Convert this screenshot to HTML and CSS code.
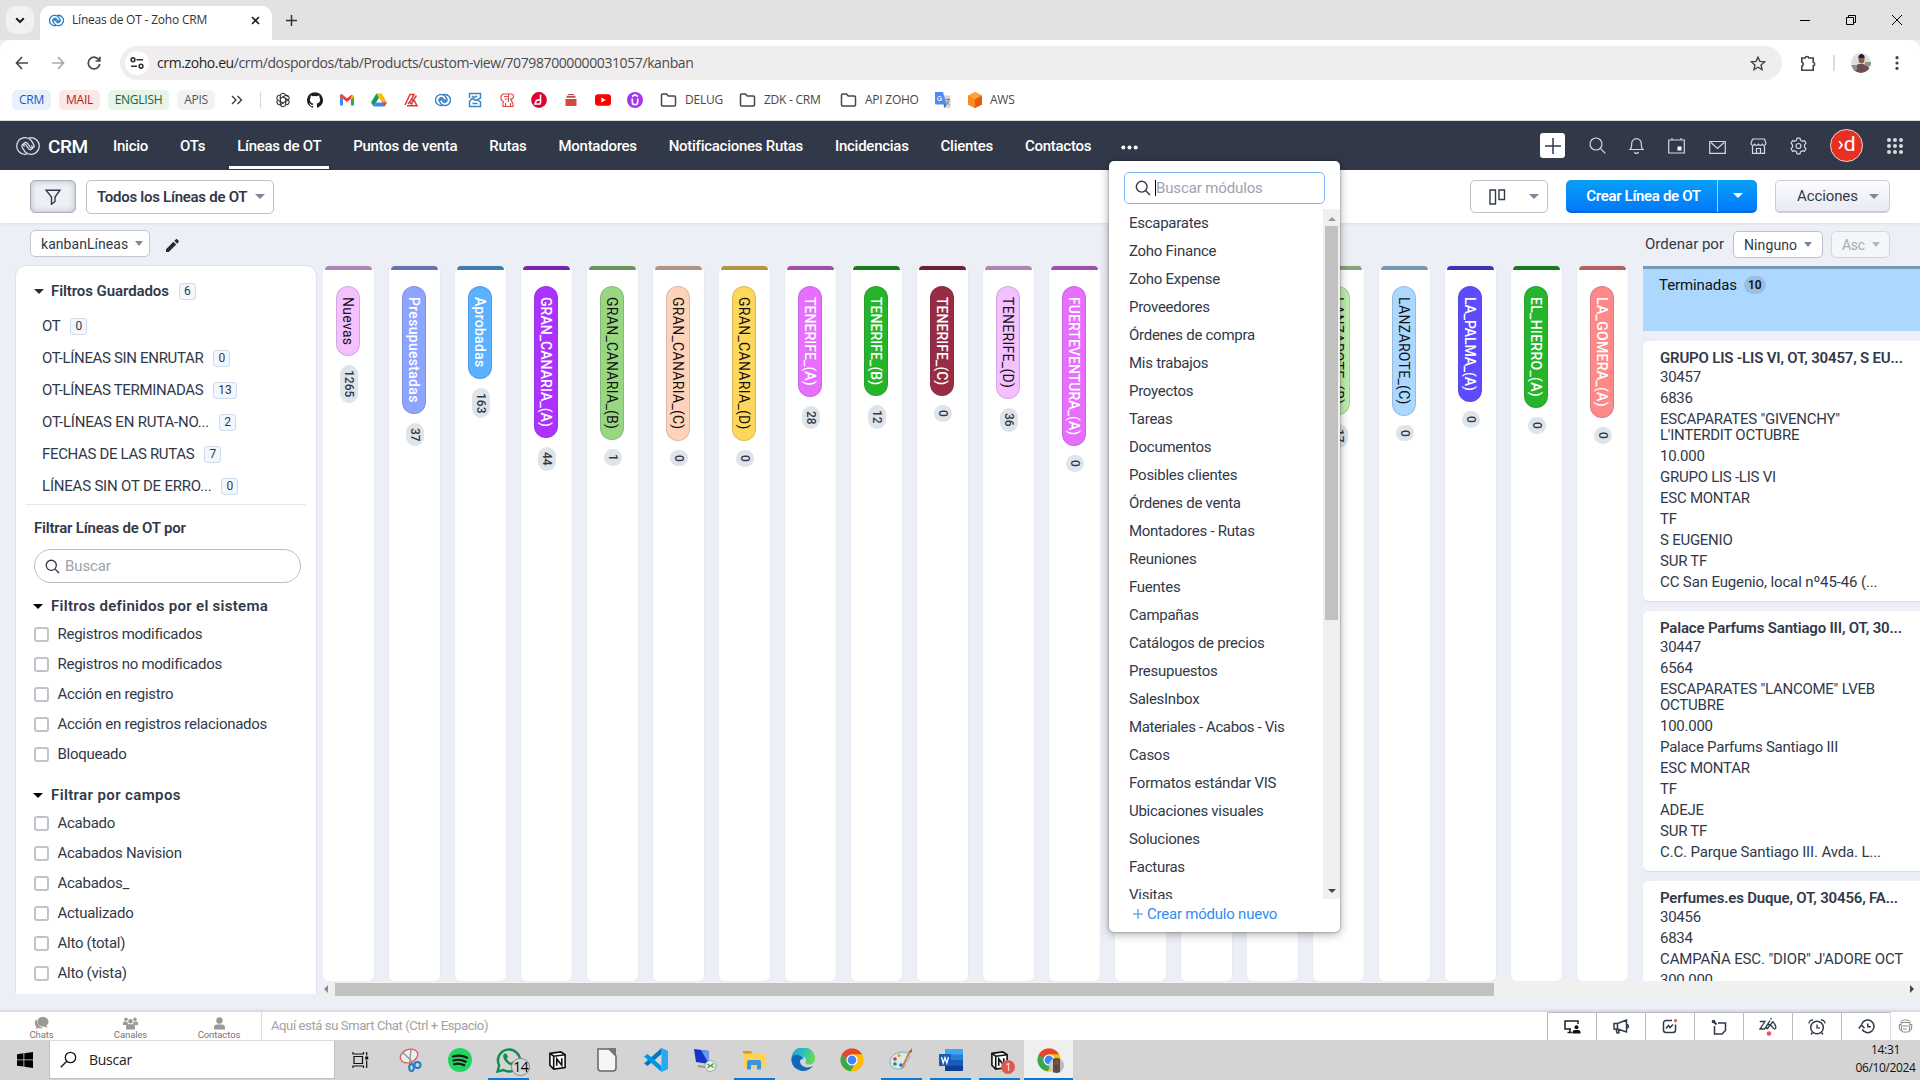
FILE: index.html
```
<!DOCTYPE html>
<html lang="es">
<head>
<meta charset="utf-8">
<title>Líneas de OT - Zoho CRM</title>
<link rel="stylesheet" href="styles.css">
</head>
<body>
<svg class="sprite" aria-hidden="true">
  <symbol id="i-search" viewBox="0 0 16 16"><circle cx="6.7" cy="6.7" r="5.4" fill="none" stroke="currentColor" stroke-width="1.4"/><path d="M10.8 10.8L15 15" stroke="currentColor" stroke-width="1.5"/></symbol>
  <symbol id="i-zoho" viewBox="0 0 24 20"><g fill="none" stroke="currentColor" stroke-linecap="round"><path d="M10.5 18.2A8.3 8.3 0 1 1 15 4.2l2.6 4.2c1.8 3-1.8 5.3-3.6 2.6l-2.5-3.6C9.8 5 6.3 7.3 8.2 10.2"/><path d="M13.5 1.8A8.3 8.3 0 1 1 9 15.800L6.400 11.600c-1.800-3 1.800-5.300 3.600-2.600l2.500 3.600c1.700 2.400 5.200.1 3.300-2.800"/></g></symbol>
  <symbol id="i-folder" viewBox="0 0 16 14"><path d="M1 2.200C1 1.500 1.500 1 2.200 1H6l1.700 2h6.100c.7 0 1.200.5 1.200 1.200v7.600c0 .7-.5 1.200-1.200 1.200H2.200C1.500 13 1 12.500 1 11.800z" fill="none" stroke="currentColor" stroke-width="1.5"/></symbol>
  <symbol id="i-notion" viewBox="0 0 20 22"><path d="M2 3.500L13.500 2 18 5v13.500L6 20l-4-4z" fill="#fff" stroke="#111" stroke-width="1.7"/><path d="M2 3.500L6 6.500 18 5M6 6.500V20" fill="none" stroke="#111" stroke-width="1.7"/><path d="M9.200 16.500V9.300l5.300 6.700V8.500" fill="none" stroke="#111" stroke-width="1.7"/></symbol>
  <symbol id="i-chrome" viewBox="0 0 24 24"><circle cx="12" cy="12" r="11.500" fill="#fbbc05"/><path d="M2 6.300a11.500 11.500 0 0 0 8.500 17L15.500 15 12 12 7 14.500z" fill="#34a853"/><path d="M2 6.300L7.200 15 12 12V6.300z" fill="#34a853"/><path d="M2 6.300A11.500 11.500 0 0 1 22 6.300H12a6 6 0 0 0-5.600 4.200z" fill="#ea4335"/><circle cx="12" cy="12" r="5.600" fill="#fff"/><circle cx="12" cy="12" r="4.400" fill="#4285f4"/></symbol>
</svg>

<header class="tabstrip">
  <div class="tab-search"><svg width="10" height="7" viewBox="0 0 10 7"><path d="M1.200 1.200L5 5l3.800-3.800" fill="none" stroke="#1f1f1f" stroke-width="2"/></svg></div>
  <div class="tab">
    <svg class="blue" width="15" height="13"><use href="#i-zoho"/></svg>
    <span class="tab-title">Líneas de OT - Zoho CRM</span>
    <svg width="9" height="9" viewBox="0 0 9 9"><path d="M1 1l7 7M8 1L1 8" stroke="#1f1f1f" stroke-width="1.600"/></svg>
  </div>
  <svg class="newtab" width="11" height="11" viewBox="0 0 11 11"><path d="M5.500 0v11M0 5.500h11" stroke="#333" stroke-width="1.500"/></svg>
  <div class="winbtns">
    <svg width="10" height="10" viewBox="0 0 10 10"><path d="M0 5.500h10" stroke="#000"/></svg>
    <svg width="10" height="10" viewBox="0 0 10 10"><path d="M.5 2.500h7v7h-7zM2.500 2V.5h7v7H8" fill="none" stroke="#000"/></svg>
    <svg width="10" height="10" viewBox="0 0 10 10"><path d="M0 0l10 10M10 0L0 10" stroke="#000"/></svg>
  </div>
</header>

<div class="addressbar">
  <svg class="nav-ico" width="14" height="14" viewBox="0 0 14 14"><path d="M7 1L1.500 7 7 13M1.500 7H13" fill="none" stroke="#474747" stroke-width="1.700"/></svg>
  <svg class="nav-ico" width="14" height="14" viewBox="0 0 14 14"><path d="M7 1l5.500 6L7 13M12.500 7H1" fill="none" stroke="#aaa" stroke-width="1.700"/></svg>
  <svg class="nav-ico" width="14" height="14" viewBox="0 0 14 14"><path d="M12.300 4.500A5.800 5.800 0 1 0 12.800 8M12.800 0.800v4.200H8.600" fill="none" stroke="#474747" stroke-width="1.700"/></svg>
  <div class="omnibox">
    <span class="site-info"><svg width="14" height="12" viewBox="0 0 14 12"><g fill="none" stroke="#333" stroke-width="1.600"><circle cx="3" cy="2.800" r="1.900"/><path d="M6.500 2.800H13M1 9.200h6"/><circle cx="11" cy="9.200" r="1.900"/></g></svg></span>
    <span class="url"><b>crm.zoho.eu</b>/crm/dospordos/tab/Products/custom-view/707987000000031057/kanban</span>
    <svg width="16" height="15" viewBox="0 0 16 15"><path d="M8 1.200l1.900 4.200 4.600.5-3.400 3.100.9 4.500L8 11.200l-4 2.300.9-4.500L1.500 5.900l4.600-.5z" fill="none" stroke="#444" stroke-width="1.400"/></svg>
  </div>
  <svg width="17" height="17" viewBox="0 0 17 17"><path d="M1.800 3h3.400a1.900 1.900 0 0 1 3.700 0h4.300v4.200a1.900 1.900 0 0 1 0 3.700v4.300H1.800v-4a2.200 2.200 0 0 0 0-4.100z" fill="none" stroke="#444" stroke-width="1.600"/></svg>
  <i class="bar-sep"></i>
  <svg width="20" height="20" viewBox="0 0 20 20"><clipPath id="pc"><circle cx="10" cy="10" r="10"/></clipPath><g clip-path="url(#pc)"><path d="M0 0h20v20H0z" fill="#dfe0dc"/><path d="M2 20c0-7 3-9 8-9s9 2 9 9z" fill="#6d4e52"/><path d="M0 12h6v5H0zM14 9h6v4h-6z" fill="#8d9190"/><ellipse cx="10.500" cy="6.500" rx="3" ry="4" fill="#8a5a45"/><path d="M7.300 5C7-.5 14-.5 13.700 5z" fill="#1b2337"/></g></svg>
  <svg width="4" height="14" viewBox="0 0 4 14"><g fill="#444"><circle cx="2" cy="1.700" r="1.600"/><circle cx="2" cy="7" r="1.600"/><circle cx="2" cy="12.300" r="1.600"/></g></svg>
</div>

<nav class="bookmarks">
  <span class="chip c-blue">CRM</span><span class="chip c-red">MAIL</span><span class="chip c-green">ENGLISH</span><span class="chip c-gray">APIS</span>
  <svg class="more" width="12" height="10" viewBox="0 0 12 10"><path d="M1 1l4 4-4 4M6.500 1l4 4-4 4" fill="none" stroke="#333" stroke-width="1.300"/></svg>
  <i class="bm-sep"></i>
  <div class="bm-icons">
    <svg viewBox="0 0 16 16"><g fill="none" stroke="#333" stroke-width="1.100"><path id="oa" d="M8 5L5.300 6.600V3.800A2.700 2.700 0 0 1 10.500 3L13.200 4.600"/><path d="M8 5L5.300 6.600V3.800A2.700 2.700 0 0 1 10.500 3L10.700 6.500" transform="rotate(60 8 8)"/><path d="M8 5L5.300 6.600V3.800A2.700 2.700 0 0 1 10.500 3" transform="rotate(120 8 8)"/><path d="M8 5L5.300 6.600V3.800A2.700 2.700 0 0 1 10.500 3L10.700 6.500" transform="rotate(180 8 8)"/><path d="M8 5L5.300 6.600V3.800A2.700 2.700 0 0 1 10.500 3" transform="rotate(240 8 8)"/><path d="M8 5L5.300 6.600V3.800A2.700 2.700 0 0 1 10.500 3" transform="rotate(300 8 8)"/></g></svg>
    <svg viewBox="0 0 16 16"><path d="M8 .2a8 8 0 0 0-2.500 15.600c.4.100.5-.2.500-.4v-1.500c-2.200.5-2.700-1-2.700-1-.4-.9-.9-1.200-.9-1.200-.7-.5.100-.5.100-.5.800.1 1.200.8 1.200.8.700 1.200 1.900.9 2.300.7.100-.5.300-.9.500-1.100-1.800-.2-3.600-.9-3.600-4 0-.9.300-1.600.8-2.100-.1-.2-.4-1 .1-2.100 0 0 .7-.2 2.200.8a7.700 7.700 0 0 1 4 0c1.500-1 2.200-.8 2.200-.8.400 1.100.2 1.900.1 2.100.5.600.8 1.300.8 2.100 0 3.100-1.900 3.800-3.700 4 .3.300.6.800.6 1.500v2.300c0 .2.100.5.500.4A8 8 0 0 0 8 .2z" fill="#1b1f24"/></svg>
    <svg viewBox="0 0 16 16"><path d="M1 3.500V13.500h3V7z" fill="#4285f4"/><path d="M15 3.500v10h-3V7z" fill="#34a853"/><path d="M1 4.500V3.500c0-1 1.500-1.500 2.500-.8L8 6.200l4.500-3.500 2.500 1.800L8 10z" fill="#ea4335"/><path d="M12 4.900l.8-.9c1-.8 2.200-.2 2.200.8v.8L12 7.500z" fill="#fbbc04"/></svg>
    <svg viewBox="0 0 16 16"><path d="M5.400 1.500h5.200L16 10.500h-5.200z" fill="#fbbc04"/><path d="M5.400 1.500L0 10.500l2.600 4L8 5.700z" fill="#0f9d58"/><path d="M2.600 14.500h10.800l2.600-4H5z" fill="#4285f4"/><path d="M10.800 10.500H16l-2.600 4z" fill="#ea4335"/></svg>
    <svg viewBox="0 0 16 16"><path d="M2 13L7 2.500h4L7.500 9 5 12M4 13.800h10L11 8 8.500 12 6 9.500M8 6.500l2 2L13.500 3.500" fill="none" stroke="#dc3a3a" stroke-width="1.500"/></svg>
    <svg class="blue" viewBox="0 0 24 20"><use href="#i-zoho"/></svg>
    <svg viewBox="0 0 16 16"><path d="M2.500 6V1.500H13.500V6L9 8.500 5 6.500 2.500 9.500V14.500H13.500V10L10.500 8M5 4l2 1.500L10 4M5.500 11.500h5" fill="none" stroke="#3d87c4" stroke-width="1.500"/></svg>
    <svg viewBox="0 0 16 16"><path d="M5 9.500C1 9.500.800 2 5 2h7c3.500 0 3.500 5-.3 5.200L14 12v2.500H4V10M5 4.500h4M5.500 7h3M9.500 2v8M6.500 14v-3M11.500 14v-3" fill="none" stroke="#dc4a4a" stroke-width="1.200"/></svg>
    <svg viewBox="0 0 16 16"><circle cx="8" cy="8" r="7.900" fill="#dd0031"/><path d="M9.500 2.500v7.800M9.500 7.500L5.500 8.500 4 12h5l.8-2.500" fill="none" stroke="#fff" stroke-width="1.600"/></svg>
    <svg viewBox="0 0 16 16"><path d="M2.500 7h11v7h-11z" fill="#d04a44"/><path d="M3.500 3.700h9v2h-9zM5 2h6v1H5z" fill="#b9504c"/></svg>
    <svg viewBox="0 0 16 16"><rect y="2.200" width="16" height="11.600" rx="3" fill="#f00"/><path d="M6.300 5.500v5l4.500-2.500z" fill="#fff"/></svg>
    <svg viewBox="0 0 16 16"><circle cx="8" cy="8" r="8" fill="#a435f0"/><path d="M5.300 6.500v3.500a2.700 2.700 0 0 0 5.400 0V6.500M5 4.500L8 2.700l3 1.800" fill="none" stroke="#fff" stroke-width="1.600"/></svg>
  </div>
  <span class="bm f1"><svg width="17" height="14"><use href="#i-folder"/></svg>DELUG</span>
  <span class="bm f2"><svg width="17" height="14"><use href="#i-folder"/></svg>ZDK - CRM</span>
  <span class="bm f3"><svg width="17" height="14"><use href="#i-folder"/></svg>API ZOHO</span>
  <span class="bm f4"><svg width="16" height="16" viewBox="0 0 16 16"><path d="M6 3.500h9.500V16H9z" fill="#d6d6d6"/><path d="M0 0h8l3.500 12.500H1A1 1 0 0 1 0 11.500z" fill="#4c8bf5"/><path d="M9 12.500h2.500L9.500 16z" fill="#2355b5"/><path d="M6.500 5.200A2.200 2.200 0 1 0 7 6.800H4.900" fill="none" stroke="#fff" stroke-width="1"/><path d="M10.500 7.500H15M12.700 6.500v1M11 12.500c1.500-1 2.500-2.500 3-5M11.500 9c.5 1.500 1.800 2.800 3 3.500" fill="none" stroke="#777" stroke-width=".9"/></svg></span>
  <span class="bm"><svg width="14" height="16" viewBox="0 0 14 16"><path d="M7 0l7 3.500v9L7 16l-7-3.500v-9z" fill="#f58536"/><path d="M0 3.500L7 7v9l-7-3.500z" fill="#f68b1f"/><path d="M14 3.500L7 7v9l7-3.500z" fill="#e8590c"/><path d="M7 0l7 3.500L7 7 0 3.500z" fill="#fda33b"/></svg>AWS</span>
</nav>

<div class="crm">
<nav class="crmnav">
  <svg class="logo" width="24" height="20"><use href="#i-zoho"/></svg>
  <span class="brand">CRM</span>
  <div class="mods">
    <a>Inicio</a><a>OTs</a><a class="on">Líneas de OT</a><a>Puntos de venta</a><a>Rutas</a><a>Montadores</a><a>Notificaciones Rutas</a><a>Incidencias</a><a>Clientes</a><a>Contactos</a>
  </div>
  <svg class="dots" width="17" height="5" viewBox="0 0 17 5"><g fill="#fff"><circle cx="2.300" cy="2.500" r="2"/><circle cx="8.500" cy="2.500" r="2"/><circle cx="14.700" cy="2.500" r="2"/></g></svg>
  <div class="tools">
    <span class="plus"><svg width="16" height="16" viewBox="0 0 16 16"><path d="M8 0v16M0 8h16" stroke="#313949" stroke-width="1.500"/></svg></span>
    <svg class="t1" width="17" height="17" viewBox="0 0 17 17"><circle cx="7" cy="7" r="6" fill="none" stroke="currentColor" stroke-width="1.200"/><path d="M11.300 11.300l5 5" stroke="currentColor" stroke-width="1.200"/></svg>
    <svg class="t2" width="15" height="18" viewBox="0 0 15 18"><path d="M1 12.500c1.700-1.200 1.700-3 1.700-6a4.800 4.800 0 0 1 9.600 0c0 3 0 4.800 1.700 6zM5.500 15a2.100 2.100 0 0 0 4 0" fill="none" stroke="currentColor" stroke-width="1.200"/></svg>
    <svg class="t3" width="17" height="17" viewBox="0 0 17 17"><path d="M.7 3h15.600v13H.7zM4 1v2M13 1v2" fill="none" stroke="currentColor" stroke-width="1.200"/><path d="M9.500 9.500h4v4h-4z" fill="#fff"/></svg>
    <svg class="t4" width="17" height="14" viewBox="0 0 17 14"><path d="M.7 1.500h15.600v11.800H.7zM2 2.500l6.500 6 6.500-6" fill="none" stroke="currentColor" stroke-width="1.200"/></svg>
    <svg class="t5" width="17" height="16" viewBox="0 0 17 16"><path d="M2.500 1h12L16 5.500a2 2 0 0 1-3.700.8 2.200 2.200 0 0 1-3.800 0 2.200 2.200 0 0 1-3.800 0A2 2 0 0 1 1 5.500zM2.500 8v7.300h12V8M6.500 15v-4.500h4V15" fill="none" stroke="currentColor" stroke-width="1.200"/></svg>
    <svg class="t6" width="17" height="18" viewBox="0 0 17 18"><path d="M7 1.200h3l.6 2.100 1.700 1 2.200-.6L16 6.200l-1.500 1.700v2.200l1.500 1.700-1.500 2.500-2.200-.6-1.700 1-.6 2.100H7l-.6-2.100-1.700-1-2.200.6L1 11.800l1.500-1.700V7.900L1 6.200l1.500-2.500 2.200.6 1.700-1z" fill="none" stroke="currentColor" stroke-width="1.200" stroke-linejoin="round"/><circle cx="8.500" cy="9" r="2.500" fill="none" stroke="currentColor" stroke-width="1.200"/></svg>
    <span class="me">›d</span>
    <svg class="grid9" width="16" height="16" viewBox="0 0 16 16"><g fill="#d8dae0"><circle cx="2" cy="2" r="2"/><circle cx="8" cy="2" r="2"/><circle cx="14" cy="2" r="2"/><circle cx="2" cy="8" r="2"/><circle cx="8" cy="8" r="2"/><circle cx="14" cy="8" r="2"/><circle cx="2" cy="14" r="2"/><circle cx="8" cy="14" r="2"/><circle cx="14" cy="14" r="2"/></g></svg>
  </div>
</nav>

<div class="viewbar">
  <button class="fbtn"><svg width="16" height="16" viewBox="0 0 16 16"><path d="M1 1.200h14L10 8v4.500l-3.500 2.700V8z" fill="none" stroke="#313949" stroke-width="1.400"/></svg></button>
  <button class="sel view">Todos los Líneas de OT<i class="car"></i></button>
  <div class="right">
    <button class="sel kb"><svg width="17" height="16" viewBox="0 0 17 16"><path d="M1 1h5.500v14H1zM10 1h5.500v9.500H10z" fill="none" stroke="#313949" stroke-width="1.400"/></svg><i class="car"></i></button>
    <button class="create"><span>Crear Línea de OT</span><em><i class="car w"></i></em></button>
    <button class="act">Acciones<i class="car"></i></button>
  </div>
</div>

<main class="work">
  <div class="subbar">
    <button class="sel kl">kanbanLíneas<i class="car"></i></button>
    <svg class="pencil" width="13" height="13" viewBox="0 0 14 14"><path d="M0 14v-3L8 3l3 3-8 8zM9 2l1.500-1.500c.5-.5 1.200-.5 1.700 0l1.200 1.200c.5.500.5 1.200 0 1.700L12 5z" fill="#262b3a"/></svg>
    <span class="ord">Ordenar por</span>
    <button class="sel nin">Ninguno<i class="car"></i></button>
    <button class="sel asc">Asc<i class="car"></i></button>
  </div>
  <div class="body">
    <aside class="side">
      <h3 class="h-saved"><i class="car d"></i>Filtros Guardados<b class="n">6</b></h3>
      <ul class="saved">
        <li>OT<b class="n">0</b></li>
        <li>OT-LÍNEAS SIN ENRUTAR<b class="n">0</b></li>
        <li>OT-LÍNEAS TERMINADAS<b class="n">13</b></li>
        <li class="loose">OT-LÍNEAS EN RUTA-NO...<b class="n">2</b></li>
        <li>FECHAS DE LAS RUTAS<b class="n">7</b></li>
        <li class="loose">LÍNEAS SIN OT DE ERRO...<b class="n">0</b></li>
      </ul>
      <h3 class="h-by">Filtrar Líneas de OT por</h3>
      <div class="find"><svg width="15" height="15"><use href="#i-search"/></svg>Buscar</div>
      <h3 class="h-sec wide"><i class="car k"></i>Filtros definidos por el sistema</h3>
      <ul class="checks">
        <li>Registros modificados</li><li>Registros no modificados</li><li>Acción en registro</li><li>Acción en registros relacionados</li><li>Bloqueado</li>
      </ul>
      <h3 class="h-sec wide second"><i class="car k"></i>Filtrar por campos</h3>
      <ul class="checks">
        <li>Acabado</li><li>Acabados Navision</li><li>Acabados_</li><li>Actualizado</li><li>Alto (total)</li><li>Alto (vista)</li>
      </ul>
    </aside>
    <section class="board">
      <div class="cols">
        <div class="col pinkl"><span class="pill">Nuevas</span><span class="ct">1265</span></div>
        <div class="col peri"><span class="pill">Presupuestadas</span><span class="ct">37</span></div>
        <div class="col sky"><span class="pill">Aprobadas</span><span class="ct">163</span></div>
        <div class="col violet"><span class="pill caps">GRAN_CANARIA_(A)</span><span class="ct">44</span></div>
        <div class="col leaf"><span class="pill">GRAN_CANARIA_(B)</span><span class="ct">1</span></div>
        <div class="col peach"><span class="pill">GRAN_CANARIA_(C)</span><span class="ct">0</span></div>
        <div class="col gold"><span class="pill">GRAN_CANARIA_(D)</span><span class="ct">0</span></div>
        <div class="col fuch"><span class="pill caps">TENERIFE_(A)</span><span class="ct">28</span></div>
        <div class="col green"><span class="pill caps">TENERIFE_(B)</span><span class="ct">12</span></div>
        <div class="col wine"><span class="pill caps">TENERIFE_(C)</span><span class="ct">0</span></div>
        <div class="col pinkl"><span class="pill">TENERIFE_(D)</span><span class="ct">36</span></div>
        <div class="col fuch"><span class="pill caps">FUERTEVENTURA_(A)</span><span class="ct">0</span></div>
        <div class="col"></div><div class="col"></div><div class="col"></div>
        <div class="col mint"><span class="pill">LANZAROTE_(B)</span><span class="ct">17</span></div>
        <div class="col ice"><span class="pill">LANZAROTE_(C)</span><span class="ct">0</span></div>
        <div class="col indigo"><span class="pill tight">LA_PALMA_(A)</span><span class="ct">0</span></div>
        <div class="col green"><span class="pill">EL_HIERRO_(A)</span><span class="ct">0</span></div>
        <div class="col coral"><span class="pill">LA_GOMERA_(A)</span><span class="ct">0</span></div>
        <div class="done">
          <div class="done-h">Terminadas<b>10</b></div>
          <article><h4>GRUPO LIS -LIS VI, OT, 30457, S EU...</h4><p>30457</p><p>6836</p><p>ESCAPARATES "GIVENCHY"<br>L'INTERDIT OCTUBRE</p><p>10.000</p><p>GRUPO LIS -LIS VI</p><p>ESC MONTAR</p><p>TF</p><p>S EUGENIO</p><p>SUR TF</p><p class="addr">CC San Eugenio, local nº45-46 (...</p></article>
          <article><h4>Palace Parfums Santiago III, OT, 30...</h4><p>30447</p><p>6564</p><p>ESCAPARATES "LANCOME" LVEB<br>OCTUBRE</p><p>100.000</p><p>Palace Parfums Santiago III</p><p>ESC MONTAR</p><p>TF</p><p>ADEJE</p><p>SUR TF</p><p class="addr">C.C. Parque Santiago III. Avda. L...</p></article>
          <article><h4>Perfumes.es Duque, OT, 30456, FA...</h4><p>30456</p><p>6834</p><p class="addr">CAMPAÑA ESC. "DIOR" J'ADORE OCT</p><p>300.000</p></article>
        </div>
      </div>
      <div class="hscroll"><i class="la"></i><i class="thumb"></i><i class="ra"></i></div>
    </section>
  </div>
</main>

<footer class="chatbar">
  <div class="chats">
    <span><svg width="15" height="13" viewBox="0 0 15 13"><path d="M1.500 12c1-.5 1-1.500.8-2C-.5 6 1 3 3 2.500 2.500 6 5 10 9 10.500c-1.500 1-3.500 1-5 .5-.8.700-1.700 1-2.500 1zM8.500 0C12 0 14.500 2 14.500 4.800c0 1.700-1 3-2 3.700.1 1 .5 1.500 1.200 2-1.200.2-2.500-.3-3.200-1C6 10 3.500 7.500 3.500 4.800 3.500 2 5.500 0 8.500 0z" fill="#999"/></svg>Chats</span>
    <span><svg width="15" height="13" viewBox="0 0 15 13"><g fill="#999"><circle cx="3" cy="2.300" r="1.800"/><circle cx="12" cy="2.300" r="1.800"/><circle cx="7.500" cy="4.300" r="2.300"/><path d="M0 8V6c0-1 .7-1.500 1.700-1.500h2.500C4.500 6 5 7 5.500 7.500L3.500 8zM15 8V6c0-1-.7-1.500-1.700-1.500h-2.500C10.500 6 10 7 9.500 7.500l2 .5zM3 12.500V9.500c0-1.500 1-2.200 2.500-2.200h4c1.500 0 2.500.7 2.500 2.200v3z"/></g></svg>Canales</span>
    <span><svg width="13" height="13" viewBox="0 0 13 13"><g fill="#999"><circle cx="6.500" cy="3.500" r="3.200"/><path d="M1 12.500v-2C1 8.500 2.300 7.500 4 7.500h5c1.700 0 3 1 3 3v2z"/></g></svg>Contactos</span>
  </div>
  <div class="smart">Aquí está su Smart Chat (Ctrl + Espacio)</div>
  <div class="cbtns">
    <span><svg width="17" height="14" viewBox="0 0 17 14"><path d="M7 9H1V1h13v3M6 9v3.500M3.500 12.500H8" fill="none" stroke="#222" stroke-width="1.500"/><circle cx="12.500" cy="7.300" r="2" fill="#111"/><path d="M8.500 13.500v-1c0-1.700 1-2.500 2.500-2.500h3c1.500 0 2.500.8 2.500 2.500v1z" fill="#111"/></svg></span>
    <span><svg width="17" height="15" viewBox="0 0 17 15"><path d="M1 4.500h3.500L13.500 1v12L4.500 10H1zM4.500 4.500V10M13.500 5.500c2.500 0 2.500 3.500 0 3.500M3 10l1 4 2-.2-.7-3.600" fill="none" stroke="#313949" stroke-width="1.500"/></svg></span>
    <span><svg width="16" height="15" viewBox="0 0 16 15"><path d="M10 1.500H4A2.500 2.500 0 0 0 1.500 4v7A2.500 2.500 0 0 0 4 13.500h7a2.500 2.500 0 0 0 2.500-2.500V5.500M4 9.500l2.500-3 1.500 2 3-3" fill="none" stroke="#313949" stroke-width="1.500"/><circle cx="13.500" cy="1.700" r="1.600" fill="#f0555b"/></svg></span>
    <span><svg width="16" height="16" viewBox="0 0 16 16"><path d="M7 4h7.500v7.500L11 15H3.500V7" fill="none" stroke="#313949" stroke-width="1.500"/><path d="M2 2l3.500 3.500" stroke="#313949" stroke-width="2"/><circle cx="2.500" cy="2.500" r="1.800" fill="#313949"/></svg></span>
    <span><svg width="18" height="19" viewBox="0 0 18 19"><path d="M.8 4.500h5.200L1 12h4.500L11 3.500M8 12L14 4.500M8 12c-2-3 1-5.500 3.500-4C13 9 14 12 15.500 12c2 0 1.500-3 0-5L14 4.500M11.500 2.500L12.500 1" fill="none" stroke="#313949" stroke-width="1.300"/><circle cx="10" cy="16.500" r="2.300" fill="#f0555b"/></svg></span>
    <span><svg width="18" height="16" viewBox="0 0 18 16"><circle cx="9" cy="8.500" r="6.300" fill="none" stroke="#313949" stroke-width="1.500"/><path d="M9 5.500v3.300h3M1 4.500C1 2 3 .8 5 1M17 4.500C17 2 15 .8 13 1M4.500 13.500L3 15.500M13.500 13.500l1.500 2" fill="none" stroke="#313949" stroke-width="1.300"/></svg></span>
    <span><svg width="17" height="15" viewBox="0 0 17 15"><path d="M4.200 10.500a6.300 6.300 0 1 0-.4-5.500M.8 9.500L3.500 6l3 3.300M9.800 4.500v3.300h3" fill="none" stroke="#313949" stroke-width="1.500"/></svg></span>
    <span class="last"><svg width="15" height="14" viewBox="0 0 15 14"><path d="M3 3.500h9l-.7 9c-1.500.8-6 .8-7.500 0zM4.500 7h6M5 10h4M3 5.500L1 5.700l.8 5 1.700.8M12 5.500l2 .2-.8 5-1.700.8M2.500 2.500c2-2 8-2 10 0" fill="none" stroke="#888" stroke-width="1"/></svg></span>
  </div>
</footer>
</div>

<div class="taskbar">
  <div class="start"><svg width="16" height="16" viewBox="0 0 16 16"><path d="M0 2.200L6.500 1.300v6.200H0zM7.300 1.200L16 0v7.500H7.300zM0 8.300h6.500v6.200L0 13.700zM7.300 8.300H16V16l-8.700-1.200z" fill="#000"/></svg></div>
  <div class="tsearch"><svg width="17" height="17" viewBox="0 0 17 17"><circle cx="10.500" cy="6.500" r="5.200" fill="none" stroke="#111" stroke-width="1.300"/><path d="M6.800 10.200L.8 16.200" stroke="#111" stroke-width="1.300"/></svg>Buscar</div>
  <div class="apps">
    <span><svg width="17" height="16" viewBox="0 0 17 16"><path d="M2 4.500h8.500v7H2zM1 0v2h10.500V0M1 16v-2h10.500V16M14.700 0v3.500M14.700 8.500V16" fill="none" stroke="#111" stroke-width="1.200"/><path d="M13.200 4.500h3v3h-3z" fill="#111"/></svg></span>
    <span><svg width="23" height="24" viewBox="0 0 23 24"><ellipse cx="10" cy="8" rx="9" ry="6.500" transform="rotate(-22 10 8)" fill="#eee" stroke="#e2575b" stroke-width="1.300"/><path d="M3 4l13 12M12 1.500l-1.500 14" stroke="#999" stroke-width="1.500"/><circle cx="18.500" cy="17" r="3" fill="none" stroke="#1f7fc9" stroke-width="2"/><ellipse cx="12.500" cy="19.500" rx="2.300" ry="3.500" fill="none" stroke="#1f7fc9" stroke-width="2"/></svg></span>
    <span><svg width="24" height="24" viewBox="0 0 24 24"><circle cx="12" cy="12" r="12" fill="#1ed760"/><path d="M5 8.500c5-1.500 10-1 14.200 1.200M5.500 12.500c4-1.200 8.500-.8 12.200 1.200M6 16.200c3.500-1 7-.6 10.200 1" fill="none" stroke="#191414" stroke-width="2.200" stroke-linecap="round"/></svg></span>
    <span class="run"><svg width="26" height="26" viewBox="0 0 26 26"><path d="M1.500 24.500l1.700-6A11 11 0 1 1 7.500 23z" fill="none" stroke="#128c4c" stroke-width="2.400"/><path d="M8.500 6.500c-2.500 2-1 6 2 9s7 4.500 9 1.500l-3-2.500-1.500 1.200c-2-.7-3.500-2.200-4.300-4.200l1.300-1.500-1.500-3.300z" fill="#128c4c"/></svg><b class="bdg gray">14</b></span>
    <span><svg width="19" height="21"><use href="#i-notion"/></svg></span>
    <span><svg width="20" height="24" viewBox="0 0 20 24"><path d="M1 1h11l7 7v12a3 3 0 0 1-3 3H4a3 3 0 0 1-3-3z" fill="#f6f6f6" stroke="#666" stroke-width="1.500"/><path d="M11 0h8v8z" fill="#777"/></svg></span>
    <span><svg width="24" height="24" viewBox="0 0 24 24"><path d="M17.500 0v24L24 21V3z" fill="#2aa8f2"/><path d="M17.500 6L3.500 18 0 15.500 17.500 0z" fill="#0078bf"/><path d="M17.500 18L3.500 6 0 8.500 17.500 24z" fill="#0098e0"/></svg></span>
    <span><svg width="24" height="24" viewBox="0 0 24 24"><path d="M1 1l15 2v13L3 14z" fill="#1633c8"/><path d="M8 2l8 1v13z" fill="#6f93f0"/><path d="M5 17l7 1v2l-7-1z" fill="#999"/><circle cx="17.500" cy="18" r="5.500" fill="#e9efe6" stroke="#9a9"/><path d="M14.500 16l2.500 2-2.500 2M20.500 15.500l-2.500 2 2.500 2" fill="none" stroke="#3ba03b" stroke-width="1.300"/></svg></span>
    <span class="run"><svg width="24" height="20" viewBox="0 0 24 20"><path d="M1 1h8l2 3H1z" fill="#dc9b09"/><path d="M1 3.500h22V18H1z" fill="#ffd257"/><path d="M5 19.500V12c0-1.500.8-2 2-2h10c1.200 0 2 .5 2 2v7.500h-4V15H9v4.500z" fill="#3a95e0"/></svg></span>
    <span><svg width="24" height="24" viewBox="0 0 24 24"><defs><linearGradient id="eg" x1="0" y1="0" x2="1" y2=".3"><stop offset="0" stop-color="#1e9bdd"/><stop offset=".6" stop-color="#35c1b8"/><stop offset="1" stop-color="#63d957"/></linearGradient></defs><path d="M.5 11A11.700 11.700 0 0 1 24 10.500c0 4-3 6-6 6-2.500 0-4-1-3.300-2.500.8-1.500.8-5-3-5C7 9 5 11 5 15z" fill="url(#eg)"/><path d="M.3 12C.8 7 5 6.500 8.500 7.500c2.500.7 4 2.500 4 4C9 9.500 8 14 10.500 17c2.500 2.800 7.500 3.500 11.500.8A12 12 0 0 1 .3 12z" fill="#1268b8"/></svg></span>
    <span><svg width="24" height="24"><use href="#i-chrome"/></svg></span>
    <span class="run"><svg width="24" height="24" viewBox="0 0 24 24"><path d="M1 14C1 7 8 4 15 4c6 1 7 6 3 9-3 2-1 4-3 6-5 4-14 2-14-5z" fill="#d9e9f3" stroke="#7fa9c4"/><circle cx="6" cy="11" r="1.800" fill="#d33"/><circle cx="10" cy="7.500" r="1.800" fill="#e8b21c"/><circle cx="6" cy="16" r="1.800" fill="#2a8f3d"/><circle cx="12" cy="17" r="1.800" fill="#2868c8"/><path d="M21 3l-8 17" stroke="#c98a45" stroke-width="2"/><path d="M22.500 0l.5 4-3 1z" fill="#8c5522"/></svg></span>
    <span class="run"><svg width="24" height="22" viewBox="0 0 24 22"><path d="M6 0h18v22H6z" fill="#2b7cd3"/><path d="M6 0h18v5.500H6z" fill="#41a5ee"/><path d="M6 11h18v5.500H6z" fill="#185abd"/><path d="M6 16.500h18V22H6z" fill="#103f91"/><path d="M0 5h12v12H0z" fill="#185abd"/><path d="M2.500 8l1.700 6L6 8.500 7.800 14 9.500 8" fill="none" stroke="#fff" stroke-width="1.300"/></svg></span>
    <span class="run"><svg width="19" height="21"><use href="#i-notion"/></svg><b class="bdg red">1</b></span>
    <span class="run active"><svg width="24" height="24"><use href="#i-chrome"/></svg><b class="bdg face"></b></span>
  </div>
  <div class="clock">14:31<br>06/10/2024</div>
</div>

<div class="menu">
  <div class="mfind"><svg width="16" height="16"><use href="#i-search"/></svg><i></i>Buscar módulos</div>
  <div class="mlist">
    <ul>
      <li>Escaparates</li><li>Zoho Finance</li><li>Zoho Expense</li><li>Proveedores</li><li>Órdenes de compra</li><li>Mis trabajos</li><li>Proyectos</li><li>Tareas</li><li>Documentos</li><li>Posibles clientes</li><li>Órdenes de venta</li><li>Montadores - Rutas</li><li>Reuniones</li><li>Fuentes</li><li>Campañas</li><li>Catálogos de precios</li><li>Presupuestos</li><li>SalesInbox</li><li class="tight">Materiales - Acabos - Vis</li><li>Casos</li><li>Formatos estándar VIS</li><li>Ubicaciones visuales</li><li>Soluciones</li><li>Facturas</li><li>Visitas</li>
    </ul>
    <div class="vscroll"><i class="ua"></i><i class="vthumb"></i><i class="da"></i></div>
  </div>
  <div class="mnew"><svg width="10" height="10" viewBox="0 0 10 10"><path d="M5 0v10M0 5h10" stroke="#338cf0" stroke-width="1.100"/></svg>Crear módulo nuevo</div>
</div>
</body>
</html>
```
FILE: styles.css
```
*, *::before { box-sizing: border-box; }
body { margin: 0; width: 1920px; height: 1080px; overflow: hidden; display: flex; flex-direction: column; position: relative; font: 15px/20px Roboto, "Liberation Sans", sans-serif; letter-spacing: -.27px; color: #313949; background: #eceff5; }
svg { display: block; flex: none; }
.sprite { position: absolute; width: 0; height: 0; }
ul, h3, h4, p { margin: 0; padding: 0; list-style: none; font-size: inherit; }
button { font: inherit; letter-spacing: inherit; color: inherit; padding: 0; }
.blue { color: #2f80c3; stroke-width: 2.1px; }

/* Browser frame */
.tabstrip { height: 40px; flex: none; display: flex; background: #e2e2e2; font: 12px/16px "Open Sans", "Noto Sans", sans-serif; letter-spacing: -.2px; color: #333; }
.tab-search { width: 28px; height: 28px; margin: 6px 0 0 6px; border-radius: 10px; background: #f1f1f1; display: flex; align-items: center; justify-content: center; }
.tab { width: 232px; height: 34px; margin: 6px 0 0 6px; padding: 0 12px 6px 9px; border-radius: 10px 10px 0 0; background: #fff; display: flex; align-items: center; gap: 8px; }
.tab-title { flex: 1; }
.newtab { margin: 15px 0 0 14px; }
.winbtns { margin-left: auto; display: flex; gap: 36px; padding: 15px 18px 0 0; }
.addressbar { height: 46px; flex: none; background: #fff; display: flex; align-items: center; padding: 0 20px 0 15px; border-radius: 10px 10px 0 0; }
.nav-ico { margin-right: 22px; }
.omnibox { width: 1662px; height: 34px; margin-right: 18px; margin-left: -3px; border-radius: 17px; background: #efedee; display: flex; align-items: center; padding: 0 16px 0 5px; }
.site-info { width: 24px; height: 24px; border-radius: 50%; background: #fff; display: flex; align-items: center; justify-content: center; }
.url { flex: 1; margin-left: 8px; font: 14px/20px "Open Sans", "Noto Sans", sans-serif; letter-spacing: -.4px; color: #4a4a4c; }
.url b { font-weight: 400; color: #1f1f1f; }
.bar-sep { width: 2px; height: 16px; margin: 0 16px; background: #dcdcdc; }
.bar-sep + svg { margin-right: 24px; }
.bookmarks { height: 35px; flex: none; background: #fff; border-bottom: 1px solid #dcdad8; display: flex; align-items: center; padding: 0 0 6px 12px; font: 12px/20px "Open Sans", "Noto Sans", sans-serif; letter-spacing: -.25px; color: #474747; }
.chip { height: 20px; border-radius: 5px; text-align: center; margin-right: 8px; }
.c-blue { width: 39px; background: #e8f0fe; color: #1a56c4; }
.c-red { width: 41px; background: #fce8e6; color: #b3191b; }
.c-green { width: 61px; background: #e6f4ea; color: #0f6b34; }
.c-gray { width: 38px; background: #f1f3f4; color: #55585c; }
.more { margin: 0 17px 0 8px; }
.bm-sep { width: 1px; height: 16px; background: #d5d5d5; margin-right: 14px; }
.bm-icons { display: flex; gap: 16px; margin-right: 17px; }
.bm-icons svg { width: 16px; height: 16px; }
.bm { display: flex; align-items: center; gap: 8px; }
.f1 { width: 79px; } .f2 { width: 101px; } .f3 { width: 95px; } .f4 { width: 33px; }

/* CRM header */
.crm { flex: 1; display: flex; flex-direction: column; min-height: 0; }
.crmnav { height: 49px; flex: none; background: #313949; color: #fff; display: flex; align-items: center; padding: 0 17px 0 16px; }
.logo { color: #d9dce2; stroke-width: 1.3px; }
.brand { margin: 2px 17px 0 8px; width: 40px; font-size: 19px; font-weight: 500; letter-spacing: -.4px; }
.mods { display: flex; gap: 15.9px; height: 49px; }
.mods a { padding: 15px 8px 0; font-weight: 500; letter-spacing: -.26px; border-bottom: 3px solid transparent; height: 48px; }
.mods .on { border-color: #fff; }
.dots { margin: 4px 0 0 22px; }
.tools { margin-left: auto; display: flex; align-items: center; color: #d5d8de; }
.plus { width: 25px; height: 25px; border-radius: 3px; background: #fff; display: flex; align-items: center; justify-content: center; }
.t1 { margin-left: 24px; } .t2 { margin-left: 23px; } .t3 { margin-left: 24px; } .t4 { margin: 2px 0 0 24px; } .t5 { margin-left: 24px; } .t6 { margin-left: 23px; }
.me { width: 33px; height: 33px; margin-left: 23px; border-radius: 50%; border: 1.5px solid #f3d5d2; background: #e63022; color: #fff; font-size: 21px; line-height: 28px; text-align: center; letter-spacing: 0; }
.grid9 { margin-left: 24px; }

/* View toolbar */
.viewbar { height: 53px; flex: none; background: #fff; display: flex; align-items: center; padding: 0 30px; box-shadow: 0 1px 2px rgba(40,50,80,.08); z-index: 1; }
.fbtn { width: 46px; height: 33px; border: 1px solid #a9aebd; border-radius: 5px; background: #eef0f6; box-shadow: inset 0 0 6px #b0b5c4; display: flex; align-items: center; justify-content: center; }
.sel { border: 1px solid #bcc0ca; border-radius: 5px; background: #fff; display: flex; align-items: center; }
.car { display: block; flex: none; width: 0; height: 0; border: 5px solid transparent; border-top: 5px solid #80869a; border-bottom: 0; }
.view { width: 188px; height: 34px; margin-left: 10px; padding-left: 10px; font-weight: 600; gap: 8px; }
.right { margin-left: auto; display: flex; align-items: center; }
.kb { width: 78px; height: 33px; padding: 0 8px 0 18px; justify-content: space-between; margin-right: 18px; }
.create { width: 191px; height: 33px; border: 0; border-bottom: 2px solid #0a64d6; border-radius: 5px; background: linear-gradient(#079ff4, #0179fd); color: #fff; display: flex; align-items: center; font-weight: 600; margin-right: 18px; letter-spacing: -.33px; }
.create span { width: 151px; text-align: center; padding-left: 4px; }
.create em { height: 32px; flex: 1; border-left: 1px solid #9cd0fc; display: flex; align-items: center; justify-content: center; }
.car.w { border-top-color: #fff; }
.act { width: 115px; height: 33px; border: 1px solid #c9cddb; border-bottom-width: 2px; border-radius: 5px; background: linear-gradient(#fcfcfe, #e9ebf3); display: flex; align-items: center; padding: 0 10px 0 21px; justify-content: space-between; letter-spacing: -.1px; }

/* Workspace */
.work { flex: 1; min-height: 0; display: flex; flex-direction: column; padding-top: 7px; }
.subbar { height: 35px; flex: none; display: flex; align-items: flex-start; padding: 0 30px; }
.kl { width: 120px; height: 27px; padding-left: 10px; gap: 7px; font-size: 14px; letter-spacing: .05px; border-color: #c3c7d0; }
.kl .car, .nin .car, .asc .car { border-width: 5px 4.5px 0; }
.pencil { margin: 9px 0 0 16px; }
.ord { margin: 4px 9px 0 auto; letter-spacing: 0; }
.nin { width: 90px; height: 27px; margin: 1px 8px 0 0; padding-left: 10px; gap: 7px; font-size: 14px; letter-spacing: .1px; }
.asc { width: 59px; height: 27px; margin-top: 1px; padding-left: 10px; gap: 7px; font-size: 14px; color: #a6aab5; background: #f4f6f9; border-color: #d3d7df; }
.asc .car { border-top-color: #b4b8c4; }
.body { display: flex; padding-left: 15px; gap: 6px; }
.side { width: 302px; height: 729px; border: 1px solid #dbe3ee; border-width: 1px 1px 0 1px; border-radius: 11px 11px 0 0; background: #fff; padding-top: 15px; overflow: hidden; }
.side h3 { font-weight: 600; display: flex; align-items: center; padding-left: 18px; height: 20px; letter-spacing: -.08px; }
.side h3 .car { margin-right: 7px; }
.car.d { border-top-color: #262d3d; }
.car.k { border-top-color: #000; }
.n { height: 17px; min-width: 17px; padding: 0 4px; margin-left: 10px; border: 1px solid #cfdcee; border-radius: 3px; background: #f2f6fd; font: 400 12px/15px Roboto, sans-serif; text-align: center; letter-spacing: 0; }
.saved { margin: 9px 10px 0; padding: 0 0 2px 16px; border-bottom: 1px solid #e6e9ee; }
.saved li { height: 32px; display: flex; align-items: center; letter-spacing: -.33px; }
.saved .loose { letter-spacing: -.2px; }
.side .h-by { margin-top: 13px; letter-spacing: -.2px; }
.find { width: 267px; height: 34px; margin: 11px 0 0 18px; border: 1px solid #b9becc; border-radius: 17px; display: flex; align-items: center; gap: 5px; padding-left: 10px; color: #9da2af; letter-spacing: -.1px; }
.find svg, .mfind svg { color: #313949; }
.side .h-sec { margin-top: 13px; }
.side .wide { letter-spacing: .29px; padding-left: 17px; }
.side .wide .car { margin-right: 8px; }
.side .second { margin-top: 16px; letter-spacing: .38px; }
.checks { margin-top: 3px; padding-left: 18px; }
.second + .checks { margin-top: 3px; }
.checks li { height: 30px; display: flex; align-items: center; gap: 8.5px; }
.checks li::before { content: ""; width: 15px; height: 15px; border: 2px solid #bfc4cc; border-radius: 3px; }

/* Kanban board */
.board { width: 1597px; }
.cols { height: 716px; overflow: hidden; display: flex; gap: 15px; padding-top: 1px; }
.col { width: 51px; height: 715px; flex: none; background: #fff; border-radius: 5px; box-shadow: 0 0 1px #c4cbd8; display: flex; flex-direction: column; align-items: center; position: relative; padding-top: 20px; }
.col::before { content: ""; position: absolute; top: 0; left: 2px; right: 2px; height: 4px; border-radius: 4px 4px 0 0; background: var(--t); }
.pill { writing-mode: vertical-rl; width: 24px; line-height: 22px; padding: 10px 0; margin-right: 1px; border: 1px solid rgba(60,60,90,.18); border-radius: 12px; background: var(--b); color: var(--c, #111); font-size: 14px; font-weight: var(--w, 400); letter-spacing: var(--ls, .3px); }
.caps { --ls: .05px; }
.tight { --ls: -.1px; }
.mlist .tight { letter-spacing: -.38px; }
.ct { writing-mode: vertical-rl; width: 18px; line-height: 18px; margin-top: 9px; padding: 5px 0; border-radius: 9px; background: #dfe4ea; font-size: 12px; font-weight: 500; letter-spacing: 0; }
.pinkl { --t: #ad85b4; --b: #f5c0ff; }
.peri { --t: #6374b2; --b: #8ea5ff; --c: #fff; --w: 500; }
.sky { --t: #3f7cb2; --b: #5ab1ff; --c: #fff; --w: 500; }
.violet { --t: #7823b2; --b: #ac33ff; --c: #fff; --w: 500; }
.leaf { --t: #6a955a; --b: #98d681; }
.peach { --t: #b29382; --b: #ffd3ba; }
.gold { --t: #b29640; --b: #ffd75c; }
.fuch { --t: #a14db2; --b: #e76eff; --c: #fff; --w: 500; }
.green { --t: #177a1b; --b: #25b52b; --c: #fff; --w: 500; }
.wine { --t: #6b1f30; --b: #992c45; --c: #fff; --w: 500; }
.mint { --t: #86a57a; --b: #c0edae; }
.ice { --t: #7897b2; --b: #acd8ff; }
.indigo { --t: #4034b2; --b: #5d4bff; --c: #fff; --w: 500; }
.coral { --t: #b26060; --b: #ff8989; --c: #fff; --w: 500; }
.done { width: 300px; flex: none; }
.done-h { height: 65px; margin-bottom: 10px; border-top: 3px solid #7897b2; background: #acd8ff; padding: 6px 0 0 16px; display: flex; align-items: flex-start; color: #111; letter-spacing: -.1px; }
.done-h b { margin: 1px 0 0 7px; width: 22px; height: 18px; border-radius: 9px; background: #98bfe2; font: 600 12px/18px Roboto, sans-serif; text-align: center; }
.done article { height: 260px; margin-bottom: 10px; padding: 7px 0 0 17px; background: #fff; border-radius: 6px 0 0 6px; box-shadow: 0 1px 1px #d8dde6; line-height: 16px; white-space: nowrap; }
.done h4 { font-weight: 600; line-height: 20px; letter-spacing: -.18px; margin-bottom: 1px; }
.done p { margin-bottom: 5px; letter-spacing: -.25px; }
.done .addr { letter-spacing: -.13px; }
.hscroll { height: 16px; background: #f0f0f0; display: flex; align-items: center; padding: 0 6px 0 1px; }
.hscroll i, .vscroll i { flex: none; display: block; }
.la { border: 4px solid transparent; border-left: 0; border-right-color: #8c8c8c; margin-right: 7px; }
.thumb { width: 1159px; height: 13px; background: #c1c1c1; }
.ra { border: 4px solid transparent; border-right: 0; border-left-color: #444; margin-left: auto; }

/* Chat bar */
.chatbar { height: 28px; flex: none; background: #fff; display: flex; box-shadow: 0 -1px 3px rgba(0,0,0,.16); }
.chats { width: 262px; border-right: 1px solid #dcdcdc; display: flex; }
.chats span { width: 89px; flex: none; display: flex; flex-direction: column; align-items: center; padding: 5px 0 0; font-size: 9.5px; line-height: 9px; letter-spacing: -.1px; color: #777; }
.chats span:first-child { margin-left: -3px; }
.chats span:last-child { width: 88px; }
.smart { flex: 1; padding: 4px 0 0 9px; font-size: 13px; letter-spacing: -.38px; color: #a2a2a2; }
.cbtns { display: flex; }
.cbtns span { width: 49px; border: 1px solid #b9bdc6; border-width: 1px 0 0 1px; display: flex; align-items: center; justify-content: center; }
.cbtns .last { width: 30px; border-top: 0; border-left-color: #dadce0; }

/* Windows taskbar */
.taskbar { height: 40px; flex: none; background: #d4d4d4; display: flex; font: 15px/20px "Open Sans", "Noto Sans", sans-serif; color: #222; }
.start { width: 49px; display: flex; align-items: center; justify-content: center; }
.tsearch { width: 286px; height: 39px; background: #fff; border: 1px solid #bfbfbf; border-top-color: #ddd; display: flex; align-items: center; gap: 12px; padding-left: 10px; font-size: 14px; }
.apps { display: flex; margin-left: 1px; }
.apps span { width: 49.1px; display: flex; align-items: center; justify-content: center; position: relative; }
.apps span:first-child { width: 50px; padding-right: 2px; }
.run { background: linear-gradient(#0a78d4, #0a78d4) center bottom / 41px 2px no-repeat; }
.active { background: linear-gradient(#0a78d4, #0a78d4) center bottom / 49px 2px no-repeat, #efefef; }
.bdg { position: absolute; left: 27px; top: 18px; width: 19px; height: 18px; border-radius: 50%; text-align: center; letter-spacing: -.5px; }
.gray { background: #d7d7d7; border: 1px solid #888; color: #000; font: 14px/16px "Open Sans", sans-serif; }
.red { background: #e2584c; width: 14px; height: 14px; top: 20px; left: 26px; color: #fff; font: 10px/14px "Open Sans", sans-serif; }
.face { width: 15px; height: 15px; top: 18px; left: 25px; background: radial-gradient(circle at 50% 30%, #7a5140 2.5px, transparent 3px), linear-gradient(90deg, #ccc 25%, #5f4a45 25% 75%, #bbb 75%); }
.clock { margin-left: auto; width: 69px; text-align: center; font-size: 12px; line-height: 18px; padding-top: 1px; letter-spacing: -.35px; color: #111; }

/* Module menu */
.menu { position: absolute; left: 1109px; top: 161px; width: 231px; height: 771px; background: #fff; border-radius: 5px; box-shadow: 0 0 2px rgba(0,0,0,.45), 0 2px 10px rgba(0,0,0,.35); padding-top: 11px; z-index: 5; }
.mfind { width: 201px; height: 32px; margin-left: 15px; border: 1px solid #80b8f5; border-radius: 5px; display: flex; align-items: center; padding-left: 10px; color: #9da2af; letter-spacing: -.13px; }
.mfind i { width: 1px; height: 16px; background: #000; margin-left: 4px; }
.mlist { display: flex; height: 690px; margin-top: 5px; overflow: hidden; }
.mlist ul { flex: 1; padding-left: 20px; }
.mlist li { height: 28px; line-height: 28px; letter-spacing: -.27px; }
.vscroll { width: 17px; background: #f0f0f0; display: flex; flex-direction: column; align-items: center; padding: 8px 0 6px; }
.ua { border: 4px solid transparent; border-top: 0; border-bottom-color: #999; margin-bottom: 5px; }
.vthumb { width: 13px; height: 394px; background: #c1c1c1; }
.da { border: 4px solid transparent; border-bottom: 0; border-top-color: #444; margin-top: auto; }
.mnew { display: flex; align-items: center; gap: 4px; padding: 5px 0 0 24px; color: #338cf0; letter-spacing: -.22px; }
```
